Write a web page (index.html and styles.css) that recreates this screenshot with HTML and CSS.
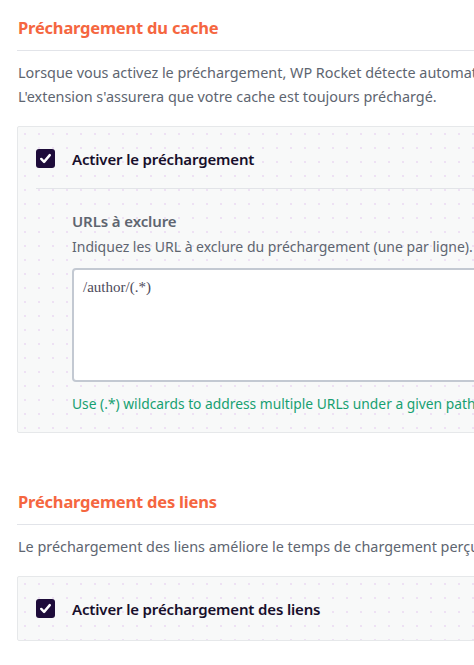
FILE: index.html
```html
<!DOCTYPE html>
<html lang="fr">
<head>
<meta charset="utf-8">
<link rel="stylesheet" href="styles.css">
</head>
<body>
<section class="section">
  <h2 class="title">Préchargement du cache</h2>
  <p class="desc">Lorsque vous activez le préchargement, WP Rocket détecte automatiquement les pages de votre site.<br>L'extension s'assurera que votre cache est toujours préchargé.</p>
  <div class="panel">
    <div class="field">
      <span class="check"><svg viewBox="0 0 20 20" width="20" height="20"><path d="M5.5 10.5 L8.5 13.5 L14.5 6.5" fill="none" stroke="#fff" stroke-width="2.6" stroke-linecap="round" stroke-linejoin="round"/></svg></span>
      <span class="label">Activer le préchargement</span>
    </div>
    <div class="sub">
      <h3 class="subtitle">URLs à exclure</h3>
      <p class="subdesc">Indiquez les URL à exclure du préchargement (une par ligne). <a href="#">Plus d'infos</a></p>
      <div class="textarea">/author/(.*)</div>
      <p class="help">Use (.*) wildcards to address multiple URLs under a given path.</p>
    </div>
  </div>
</section>
<section class="section second">
  <h2 class="title">Préchargement des liens</h2>
  <p class="desc">Le préchargement des liens améliore le temps de chargement perçu par vos visiteurs.</p>
  <div class="panel">
    <div class="field nob">
      <span class="check"><svg viewBox="0 0 20 20" width="20" height="20"><path d="M5.5 10.5 L8.5 13.5 L14.5 6.5" fill="none" stroke="#fff" stroke-width="2.6" stroke-linecap="round" stroke-linejoin="round"/></svg></span>
      <span class="label">Activer le préchargement des liens</span>
    </div>
  </div>
</section>
</body>
</html>
```
FILE: styles.css
```css
* { box-sizing: border-box; }
html, body { margin: 0; padding: 0; background: #fff; overflow: hidden; }
body {
  font-family: "Noto Sans", "Open Sans", sans-serif;
  width: 700px;
  padding: 17px 0 0 17px;
}
.section { display: flex; flex-direction: column; }
.second { margin-top: 58px; }
.title {
  margin: 0;
  font-size: 16.5px;
  line-height: 22px;
  font-weight: 700;
  color: #f56640;
  padding-left: 1px;
  padding-bottom: 11px;
  border-bottom: 1px solid #e2e4e9;
  letter-spacing: -0.2px;
}
.desc {
  margin: 10px 0 0 1px;
  font-size: 14.4px;
  line-height: 24px;
  color: #5e6570;
  white-space: nowrap;
}
.panel {
  margin-top: 17px;
  background-color: #f8f9f9;
  background-image: radial-gradient(circle, rgba(220,180,235,0.35) 0.7px, transparent 0.9px);
  background-size: 14px 14px;
  border: 1px solid #e6e8ea;
  border-radius: 2px;
  padding: 0 0 0 18px;
}
.field {
  display: flex;
  align-items: center;
  gap: 17px;
  height: 62px;
  padding-top: 2px;
  border-bottom: 1px solid #e2e4e8;
}
.field.nob { border-bottom: 0; height: 63px; padding-top: 0; }
.check {
  width: 19px; height: 19px;
  background: #1e0c3a;
  border-radius: 3px;
  display: flex; align-items: center; justify-content: center;
  flex: none;
}
.check svg { width: 19px; height: 19px; }
.label {
  font-size: 15px;
  font-weight: 600;
  color: #170f2b;
  letter-spacing: -0.15px;
}
.sub { padding: 20px 0 16px 36px; }
.subtitle {
  margin: 0;
  font-size: 15px;
  line-height: 24px;
  font-weight: 600;
  color: #5e6570;
  letter-spacing: -0.1px;
}
.subdesc {
  margin: 2px 0 0;
  font-size: 14px;
  line-height: 24px;
  color: #5e6570;
  white-space: nowrap;
}
.subdesc a { color: #5e6570; }
.textarea {
  margin-top: 9px;
  width: 620px;
  height: 114px;
  background: #fff;
  border: 2px solid #c3c9d2;
  border-radius: 4px;
  padding: 7px 9px;
  font-family: "Liberation Serif", serif;
  font-size: 15px;
  line-height: 20px;
  color: #4d4a5a;
}
.help {
  margin: 10px 0 0;
  font-size: 13.8px;
  line-height: 24px;
  color: #16a071;
  white-space: nowrap;
}
```
